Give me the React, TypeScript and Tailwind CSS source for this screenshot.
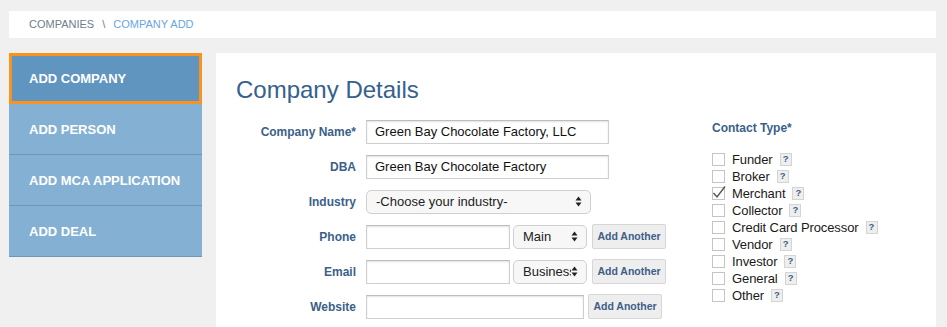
import React from "react";

const Arrows = () => (
  <svg width="7" height="11" viewBox="0 0 7 11" className="shrink-0">
    <path d="M3.5 0.5 L6.5 4.5 L0.5 4.5 Z" fill="#222" />
    <path d="M3.5 10.5 L6.5 6.5 L0.5 6.5 Z" fill="#222" />
  </svg>
);

function Select({ text, w }: { text: string; w: string }) {
  return (
    <div
      className={`${w} h-[24px] rounded-[5px] border border-[#cfcfcf] bg-[#f7f7f7] flex items-center justify-between pl-[9px] pr-[8px] text-[13px] text-[#222] overflow-hidden`}
    >
      <span className="whitespace-nowrap overflow-hidden">{text}</span>
      <Arrows />
    </div>
  );
}

function Input({ value, w }: { value?: string; w: string }) {
  return (
    <div
      className={`${w} h-[24px] border border-[#cfcfcf] border-t-[#bdbdbd] shadow-[inset_0_1px_2px_rgba(0,0,0,0.12)] bg-white flex items-center px-[8px] text-[13px] text-[#111] whitespace-nowrap`}
    >
      {value}
    </div>
  );
}

function AddBtn({ w }: { w: string }) {
  return (
    <div
      className={`${w} h-[25px] rounded-[2px] border border-[#d6d6d6] bg-[#eeeeee] flex items-center justify-center text-[10.5px] font-bold text-[#3d5f87]`}
    >
      Add Another
    </div>
  );
}

function Row({ label, children }: { label: string; children: React.ReactNode }) {
  return (
    <div className="flex items-center h-[25px] mb-[10px]">
      <div className="w-[120px] text-right text-[12px] font-bold text-[#3b5f89] pr-0">{label}</div>
      <div className="ml-[10px] flex items-center">{children}</div>
    </div>
  );
}

const types = [
  "Funder",
  "Broker",
  "Merchant",
  "Collector",
  "Credit Card Processor",
  "Vendor",
  "Investor",
  "General",
  "Other",
];

export default function App() {
  return (
    <div
      className="w-[947px] h-[327px] bg-[#f0f0f0] pt-[11px] pl-[9px] pr-[11px] overflow-hidden"
      style={{ fontFamily: '"Liberation Sans", Arial, sans-serif' }}
    >
      <div className="h-[27px] bg-white flex items-center pl-[20px] text-[11px] tracking-[0px]">
        <span className="text-[#707d8c]">COMPANIES</span>
        <span className="text-[#707d8c] mx-[8px]">\</span>
        <span className="text-[#6aa5e4]">COMPANY ADD</span>
      </div>
      <div className="flex mt-[15px]">
        <div className="w-[193px] shrink-0 self-start">
          <div className="h-[51px] bg-[#5f95bf] border-[3px] border-[#f7931e] flex items-center pl-[17px] text-white text-[13px] font-bold">
            ADD COMPANY
          </div>
          {["ADD PERSON", "ADD MCA APPLICATION", "ADD DEAL"].map((t) => (
            <div
              key={t}
              className="h-[51px] bg-[#84b1d3] border-b border-[#6e96b5] flex items-center pl-[20px] pt-[1px] text-white text-[13px] font-bold"
            >
              {t}
            </div>
          ))}
        </div>
        <div className="ml-[14px] flex-1 bg-white h-[300px] pl-[20px] pt-[22px] flex">
          <div className="w-[476px]">
            <h1 className="text-[24px] leading-[30px] text-[#34618e] mb-[14px]">Company Details</h1>
            <Row label="Company Name*">
              <Input w="w-[243px]" value="Green Bay Chocolate Factory, LLC" />
            </Row>
            <Row label="DBA">
              <Input w="w-[243px]" value="Green Bay Chocolate Factory" />
            </Row>
            <Row label="Industry">
              <Select w="w-[225px]" text="-Choose your industry-" />
            </Row>
            <Row label="Phone">
              <Input w="w-[144px]" />
              <div className="ml-[3px]">
                <Select w="w-[74px]" text="Main" />
              </div>
              <div className="ml-[5px]">
                <AddBtn w="w-[74px]" />
              </div>
            </Row>
            <Row label="Email">
              <Input w="w-[144px]" />
              <div className="ml-[3px]">
                <Select w="w-[74px]" text="Business" />
              </div>
              <div className="ml-[5px]">
                <AddBtn w="w-[74px]" />
              </div>
            </Row>
            <Row label="Website">
              <Input w="w-[218px]" />
              <div className="ml-[4px]">
                <AddBtn w="w-[74px]" />
              </div>
            </Row>
          </div>
          <div className="pt-[46px]">
            <div className="text-[12px] font-bold text-[#3b5f89] leading-[14px]">Contact Type*</div>
            <div className="mt-[16px] flex flex-col">
              {types.map((t) => (
                <div key={t} className="flex items-center h-[17px]">
                  <div className="w-[13px] h-[13px] border border-[#c4c4c4] bg-white relative shrink-0">
                    {t === "Merchant" && (
                      <svg width="14" height="14" viewBox="0 0 14 14" className="absolute left-[-1px] top-[-3px]">
                        <path d="M1.5 8 L5 12 L13 1.5" stroke="#555" strokeWidth="1.4" fill="none" />
                      </svg>
                    )}
                  </div>
                  <span className="ml-[7px] text-[13px] text-[#1a1a1a] tracking-[-0.1px]">{t}</span>
                  <span className="ml-[7px] w-[12px] h-[13px] border border-[#d4d4d4] bg-[#eeeeee] flex items-center justify-center text-[9.5px] font-bold text-[#3d5f87]">
                    ?
                  </span>
                </div>
              ))}
            </div>
          </div>
        </div>
      </div>
    </div>
  );
}
